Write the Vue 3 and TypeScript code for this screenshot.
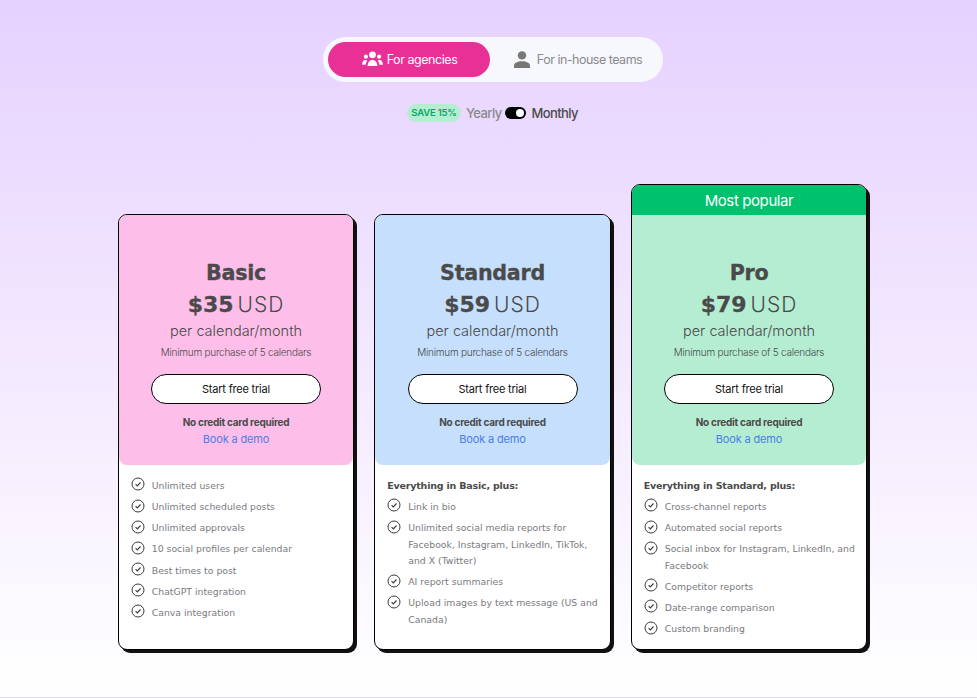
<script setup lang="ts">
interface Plan {
  name: string
  price: string
  tint: string
  intro?: string
  banner?: string
  features: string[]
}

const plans: Plan[] = [
  {
    name: 'Basic',
    price: '$35',
    tint: '#fdbfe9',
    features: [
      'Unlimited users',
      'Unlimited scheduled posts',
      'Unlimited approvals',
      '10 social profiles per calendar',
      'Best times to post',
      'ChatGPT integration',
      'Canva integration',
    ],
  },
  {
    name: 'Standard',
    price: '$59',
    tint: '#c5dffd',
    intro: 'Everything in Basic, plus:',
    features: [
      'Link in bio',
      'Unlimited social media reports for Facebook, Instagram, LinkedIn, TikTok, and X (Twitter)',
      'AI report summaries',
      'Upload images by text message (US and Canada)',
    ],
  },
  {
    name: 'Pro',
    price: '$79',
    tint: '#b5edd3',
    banner: 'Most popular',
    intro: 'Everything in Standard, plus:',
    features: [
      'Cross-channel reports',
      'Automated social reports',
      'Social inbox for Instagram, LinkedIn, and Facebook',
      'Competitor reports',
      'Date-range comparison',
      'Custom branding',
    ],
  },
]
</script>

<template>
  <main class="page">
    <div class="audience">
      <button class="tab tab-active" type="button">
        <svg class="tab-icon" width="21" height="17" viewBox="0 0 22 18" fill="currentColor">
          <circle cx="11" cy="4" r="3.6" />
          <circle cx="4" cy="6" r="2.2" />
          <circle cx="18" cy="6" r="2.2" />
          <path d="M5.8 16c0-3.8 2.2-6.6 5.2-6.6s5.2 2.8 5.2 6.6z" />
          <path d="M0 14.6c0-3 1.4-5 3.6-5 .7 0 1.3.2 1.8.6-1 1.2-1.6 2.8-1.8 4.4z" />
          <path d="M22 14.6c0-3-1.4-5-3.6-5-.7 0-1.3.2-1.8.6 1 1.2 1.6 2.8 1.8 4.4z" />
        </svg>
        <span>For agencies</span>
      </button>
      <button class="tab" type="button">
        <svg class="tab-icon person" width="16" height="17" viewBox="0 0 16 17" fill="currentColor">
          <circle cx="8" cy="4.4" r="4.2" />
          <path d="M0 17v-2.2c0-3 3.6-4.6 8-4.6s8 1.6 8 4.6V17z" />
        </svg>
        <span>For in-house teams</span>
      </button>
    </div>

    <div class="billing">
      <span class="save">SAVE 15%</span>
      <span class="yearly">Yearly</span>
      <span class="switch"><span class="knob"></span></span>
      <span class="monthly">Monthly</span>
    </div>

    <section class="cards">
      <article v-for="plan in plans" :key="plan.name" class="card">
        <div v-if="plan.banner" class="banner">{{ plan.banner }}</div>
        <div class="summary" :class="{ square: plan.banner }" :style="{ background: plan.tint }">
          <h2 class="name">{{ plan.name }}</h2>
          <p class="price"><strong>{{ plan.price }}</strong> <span class="currency">USD</span></p>
          <p class="period">per calendar/month</p>
          <p class="minimum">Minimum purchase of 5 calendars</p>
          <a class="trial">Start free trial</a>
          <p class="no-card">No credit card required</p>
          <a class="demo">Book a demo</a>
        </div>
        <div class="details">
          <p v-if="plan.intro" class="intro">{{ plan.intro }}</p>
          <ul class="features">
            <li v-for="feature in plan.features" :key="feature">
              <svg class="check" width="14" height="14" viewBox="0 0 14 14" fill="none" stroke="#3a3a3a">
                <circle cx="7" cy="7" r="6" stroke-width="1" />
                <path d="M4.6 7.2l1.7 1.7 3.2-3.4" stroke-width="1.1" />
              </svg>
              <span>{{ feature }}</span>
            </li>
          </ul>
        </div>
      </article>
    </section>
  </main>
</template>

<style>
html,
body {
  margin: 0;
  padding: 0;
}
</style>

<style scoped>
.page {
  box-sizing: border-box;
  height: 698px;
  padding: 37px 0 0 8px;
  overflow: hidden;
  display: flex;
  flex-direction: column;
  align-items: center;
  background: linear-gradient(180deg, #e6d1ff 0%, #ffffff 100%);
  border-bottom: 1px solid #dcd8ee;
  font-family: Inter, "Liberation Sans", sans-serif;
  color: #4a4a4a;
}

.audience {
  box-sizing: border-box;
  width: 340px;
  height: 45px;
  padding: 5px;
  display: flex;
  gap: 5px;
  background: #f7f8fe;
  border-radius: 23px;
}

.tab {
  flex: 0 0 auto;
  width: 162px;
  height: 35px;
  padding: 0 0 0 2px;
  border: 0;
  border-radius: 18px;
  background: transparent;
  display: flex;
  align-items: center;
  justify-content: center;
  gap: 4px;
  font: 400 12.5px Inter, sans-serif;
  letter-spacing: -0.45px;
  color: #8a8a8a;
}

.tab + .tab {
  width: 165px;
  gap: 7px;
  letter-spacing: -0.5px;
}

.tab-active {
  background: #e83096;
  color: #ffffff;
}

.person {
  color: #777777;
}

.billing {
  margin-top: 21px;
  height: 19px;
  display: flex;
  align-items: center;
  font-size: 13px;
  font-weight: 500;
  letter-spacing: -0.6px;
}

.save {
  box-sizing: border-box;
  width: 54px;
  height: 18px;
  line-height: 18px;
  text-align: center;
  border-radius: 9px;
  background: #b5edd3;
  color: #00a862;
  font-size: 9.5px;
  font-weight: 600;
  letter-spacing: -0.2px;
  white-space: nowrap;
}

.yearly {
  margin-left: 5px;
  color: #8a8a8a;
}

.switch {
  margin-left: 3px;
  position: relative;
  width: 21px;
  height: 12px;
  border-radius: 6px;
  background: #000000;
}

.knob {
  position: absolute;
  top: 2px;
  right: 2px;
  width: 8px;
  height: 8px;
  border-radius: 50%;
  background: #ffffff;
}

.monthly {
  margin-left: 6px;
  color: #4a4a4a;
}

.cards {
  margin-top: 62px;
  width: 749.5px;
  display: flex;
  align-items: flex-end;
  gap: 20px;
}

.card {
  box-sizing: border-box;
  width: 236.5px;
  flex: 0 0 auto;
  border: 1px solid #000000;
  border-radius: 9px;
  background: #ffffff;
  box-shadow: 3px 3px 0 #111111;
  overflow: hidden;
}

.banner {
  height: 30px;
  line-height: 31px;
  text-align: center;
  background: #00c16e;
  color: #ffffff;
  font-size: 15px;
  letter-spacing: -0.4px;
}

.summary {
  box-sizing: border-box;
  height: 250px;
  padding-top: 45px;
  display: flex;
  flex-direction: column;
  align-items: center;
  border-radius: 8px;
}

.summary.square {
  border-radius: 0 0 8px 8px;
}

.name {
  margin: 0;
  font-family: "DejaVu Sans", sans-serif;
  font-size: 20.7px;
  line-height: 26px;
  font-weight: 700;
  letter-spacing: -0.3px;
  -webkit-text-stroke: 0.3px #4a4a4a;
}

.price {
  margin: 6px 0 0;
  font-size: 21px;
  line-height: 26px;
  font-weight: 300;
}

.price strong {
  font-family: "DejaVu Sans", sans-serif;
  font-size: 22px;
  font-weight: 700;
  -webkit-text-stroke: 0.3px #4a4a4a;
}

.currency {
  margin-left: -2px;
  letter-spacing: 1px;
}

.period {
  margin: 3px 0 0;
  font-size: 14.5px;
  line-height: 20px;
  font-weight: 300;
}

.minimum {
  margin: 4px 0 0;
  font-size: 10px;
  line-height: 14px;
  font-weight: 300;
  letter-spacing: -0.25px;
}

.trial {
  box-sizing: border-box;
  margin-top: 15px;
  width: 170px;
  height: 30px;
  line-height: 28px;
  text-align: center;
  border: 1px solid #000000;
  border-radius: 15px;
  background: #ffffff;
  color: #111111;
  font-size: 11px;
  letter-spacing: -0.2px;
}

.no-card {
  margin: 11px 0 0;
  font-size: 10px;
  line-height: 14px;
  font-weight: 700;
  letter-spacing: -0.25px;
}

.demo {
  margin-top: 3px;
  font-size: 11px;
  line-height: 14px;
  letter-spacing: -0.15px;
  color: #4a7ee8;
}

.details {
  box-sizing: border-box;
  height: 184px;
  padding: 13px 10px 0 12px;
}

.intro {
  margin: 0;
  height: 21px;
  font-family: "DejaVu Sans", sans-serif;
  font-size: 9.5px;
  line-height: 15px;
  font-weight: 700;
  letter-spacing: -0.2px;
  color: #4a4a4a;
}

.features {
  list-style: none;
  margin: 0;
  padding: 0;
  display: flex;
  flex-direction: column;
  gap: 4.75px;
}

.features li {
  display: flex;
  gap: 7px;
  font-family: "DejaVu Sans", sans-serif;
  font-size: 9.3px;
  line-height: 16.4px;
  color: #7a7a80;
}

.check {
  flex: 0 0 auto;
  margin-top: -0.6px;
}
</style>
